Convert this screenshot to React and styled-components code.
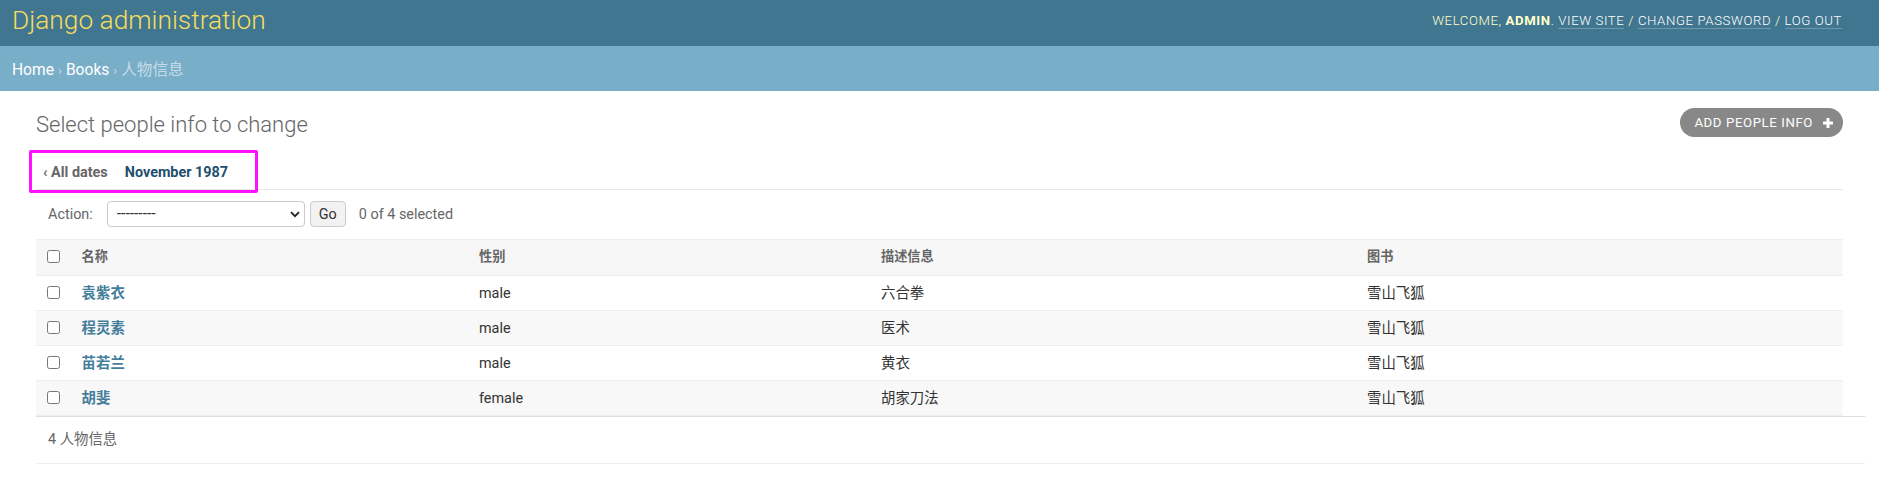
import React from "react";
import styled, { createGlobalStyle } from "styled-components";

const GlobalStyle = createGlobalStyle`
  html, body { margin: 0; padding: 0; background: #fff; }
  body {
    font-family: Roboto, "Noto Sans CJK SC", "Liberation Sans", sans-serif;
    color: #333;
    font-size: 14.4px;
  }
  * { box-sizing: border-box; }
`;

const Header = styled.header`
  display: flex;
  justify-content: space-between;
  align-items: flex-start;
  height: 46px;
  padding: 0 37px 0 12px;
  background: #417690;
`;

const Branding = styled.h1`
  margin: 0;
  padding-top: 6px;
  font-size: 26.3px;
  line-height: 28.8px;
  font-weight: 300;
  color: #f5dd5d;
`;

const UserTools = styled.div`
  padding-top: 11px;
  font-size: 13.2px;
  line-height: 19.2px;
  letter-spacing: 0.6px;
  text-transform: uppercase;
  font-weight: 300;
  color: #ffc;
  white-space: nowrap;
  strong { font-weight: 700; }
`;

const ToolLink = styled.a`
  color: #fff;
  text-decoration: none;
  border-bottom: 1px solid rgba(255, 255, 255, 0.25);
`;

const Breadcrumbs = styled.nav`
  background: #79aec8;
  padding: 14px 12px 10px;
  font-size: 15.6px;
  line-height: 20px;
  color: #c4dce8;
`;

const Crumb = styled.a`
  color: #fff;
  text-decoration: none;
`;

const Sep = styled.span`
  color: #c4dce8;
  font-size: 13px;
  margin: 0 4px;
`;

const Content = styled.main`
  padding: 17px 36px 0;
`;

const TitleRow = styled.div`
  display: flex;
  justify-content: space-between;
  align-items: flex-start;
`;

const Title = styled.h1`
  margin: 3px 0 0;
  font-size: 22px;
  line-height: 28.8px;
  font-weight: 300;
  color: #666;
`;

const AddButton = styled.a`
  display: inline-flex;
  align-items: center;
  gap: 10px;
  height: 29px;
  padding: 0 10px 0 14px;
  border-radius: 15px;
  background: #888;
  color: #fff;
  font-size: 13.2px;
  letter-spacing: 0.6px;
  text-transform: uppercase;
  text-decoration: none;
`;

const DateBar = styled.div`
  position: relative;
  margin-top: 10.5px;
  padding: 13px 0 6px 7px;
  line-height: 19.2px;
  font-size: 14.4px;
  font-weight: 700;
  border-bottom: 1px solid #e8e8e8;
  display: flex;
  gap: 17px;
`;

const DateBack = styled.a`
  color: #666;
  text-decoration: none;
`;

const DateLink = styled.a`
  color: #1f4e6e;
  text-decoration: none;
`;

const Highlight = styled.div`
  position: absolute;
  left: -7px;
  top: 0;
  width: 229px;
  height: 43px;
  border: 3px solid #ff10ff;
  border-radius: 2px;
  pointer-events: none;
`;

const Actions = styled.div`
  display: flex;
  align-items: center;
  height: 49px;
  padding: 0 12px;
  color: #666;
  font-size: 14.4px;
`;

const SelectWrap = styled.span`
  position: relative;
  display: inline-block;
  margin-left: 14px;
  svg {
    position: absolute;
    right: 5px;
    top: 10px;
    pointer-events: none;
  }
`;

const Select = styled.select`
  appearance: none;
  width: 198px;
  height: 26px;
  border: 1px solid #ccc;
  border-radius: 4px;
  background: #fff;
  padding: 0 0 0 9px;
  font-family: Roboto, sans-serif;
  font-size: 15.6px;
  color: #333;
`;

const GoButton = styled.button`
  margin-left: 5px;
  width: 36px;
  height: 26px;
  border: 1px solid #ccc;
  border-radius: 4px;
  background: #f2f2f2;
  font-family: Roboto, sans-serif;
  font-size: 14.4px;
  color: #333;
  padding: 0;
`;

const Counter = styled.span`
  margin-left: 13px;
`;

const Table = styled.table`
  width: 100%;
  border-collapse: collapse;
  table-layout: fixed;
`;

const HeadCell = styled.th`
  background: #f7f7f7;
  border-top: 1px solid #eee;
  border-bottom: 1px solid #eee;
  color: #666;
  font-weight: 600;
  font-size: 13.2px;
  line-height: 16.8px;
  text-align: left;
  padding: ${(p) => (p.$check ? "0 0 0 11px" : "9.6px")};
  vertical-align: middle;
`;

const Row = styled.tr`
  background: ${(p) => (p.$alt ? "#f8f8f8" : "#fff")};
`;

const Cell = styled.td`
  padding: ${(p) => (p.$check ? "7.4px 0 7.4px 11px" : "7.4px 9.6px")};
  line-height: 19.2px;
  font-size: 14.4px;
  color: #333;
  border-bottom: 1px solid #eee;
  vertical-align: top;
`;

const NameLink = styled.a`
  color: #447e9b;
  font-weight: 600;
  text-decoration: none;
`;

const Check = styled.input.attrs({ type: "checkbox" })`
  display: block;
  margin: ${(p) => (p.$head ? "-2px 0 0" : "2.6px 0 0")};
  width: 13px;
  height: 13px;
`;

const Paginator = styled.p`
  margin: 0;
  width: calc(100% + 22px);
  padding: 10px 12px;
  line-height: 26px;
  font-size: 14.4px;
  color: #666;
  border-top: 1px solid #ddd;
  border-bottom: 1px solid #eee;
`;

const rows = [
  { name: "袁紫衣", gender: "male", desc: "六合拳", book: "雪山飞狐" },
  { name: "程灵素", gender: "male", desc: "医术", book: "雪山飞狐" },
  { name: "苗若兰", gender: "male", desc: "黄衣", book: "雪山飞狐" },
  { name: "胡斐", gender: "female", desc: "胡家刀法", book: "雪山飞狐" },
];

export default function App() {
  return (
    <>
      <GlobalStyle />
      <Header>
        <Branding>Django administration</Branding>
        <UserTools>
          Welcome, <strong>admin</strong>. <ToolLink href="#">View site</ToolLink> /{" "}
          <ToolLink href="#">Change password</ToolLink> / <ToolLink href="#">Log out</ToolLink>
        </UserTools>
      </Header>
      <Breadcrumbs>
        <Crumb href="#">Home</Crumb>
        <Sep>›</Sep>
        <Crumb href="#">Books</Crumb>
        <Sep>›</Sep>
        人物信息
      </Breadcrumbs>
      <Content>
        <TitleRow>
          <Title>Select people info to change</Title>
          <AddButton href="#">
            Add people info
            <svg width="10" height="10" viewBox="0 0 10 10">
              <rect x="3.5" y="0" width="3" height="10" rx="0.5" fill="#fff" />
              <rect x="0" y="3.5" width="10" height="3" rx="0.5" fill="#fff" />
            </svg>
          </AddButton>
        </TitleRow>
        <DateBar>
          <DateBack href="#">‹ All dates</DateBack>
          <DateLink href="#">November 1987</DateLink>
          <Highlight />
        </DateBar>
        <Actions>
          <label>Action:</label>
          <SelectWrap>
            <Select defaultValue="">
              <option value="">---------</option>
              <option value="delete">Delete selected people info</option>
            </Select>
            <svg width="10" height="7" viewBox="0 0 10 7">
              <path d="M1 1.2 L5 5.2 L9 1.2" fill="none" stroke="#222" strokeWidth="1.8" />
            </svg>
          </SelectWrap>
          <GoButton>Go</GoButton>
          <Counter>0 of 4 selected</Counter>
        </Actions>
        <Table>
          <colgroup>
            <col style={{ width: 36 }} />
            <col style={{ width: 397.4 }} />
            <col style={{ width: 402 }} />
            <col style={{ width: 486 }} />
            <col />
          </colgroup>
          <thead>
            <tr>
              <HeadCell $check>
                <Check $head />
              </HeadCell>
              <HeadCell>名称</HeadCell>
              <HeadCell>性别</HeadCell>
              <HeadCell>描述信息</HeadCell>
              <HeadCell>图书</HeadCell>
            </tr>
          </thead>
          <tbody>
            {rows.map((r, i) => (
              <Row key={r.name} $alt={i % 2 === 1}>
                <Cell $check>
                  <Check />
                </Cell>
                <Cell>
                  <NameLink href="#">{r.name}</NameLink>
                </Cell>
                <Cell>{r.gender}</Cell>
                <Cell>{r.desc}</Cell>
                <Cell>{r.book}</Cell>
              </Row>
            ))}
          </tbody>
        </Table>
        <Paginator>4 人物信息</Paginator>
      </Content>
    </>
  );
}
